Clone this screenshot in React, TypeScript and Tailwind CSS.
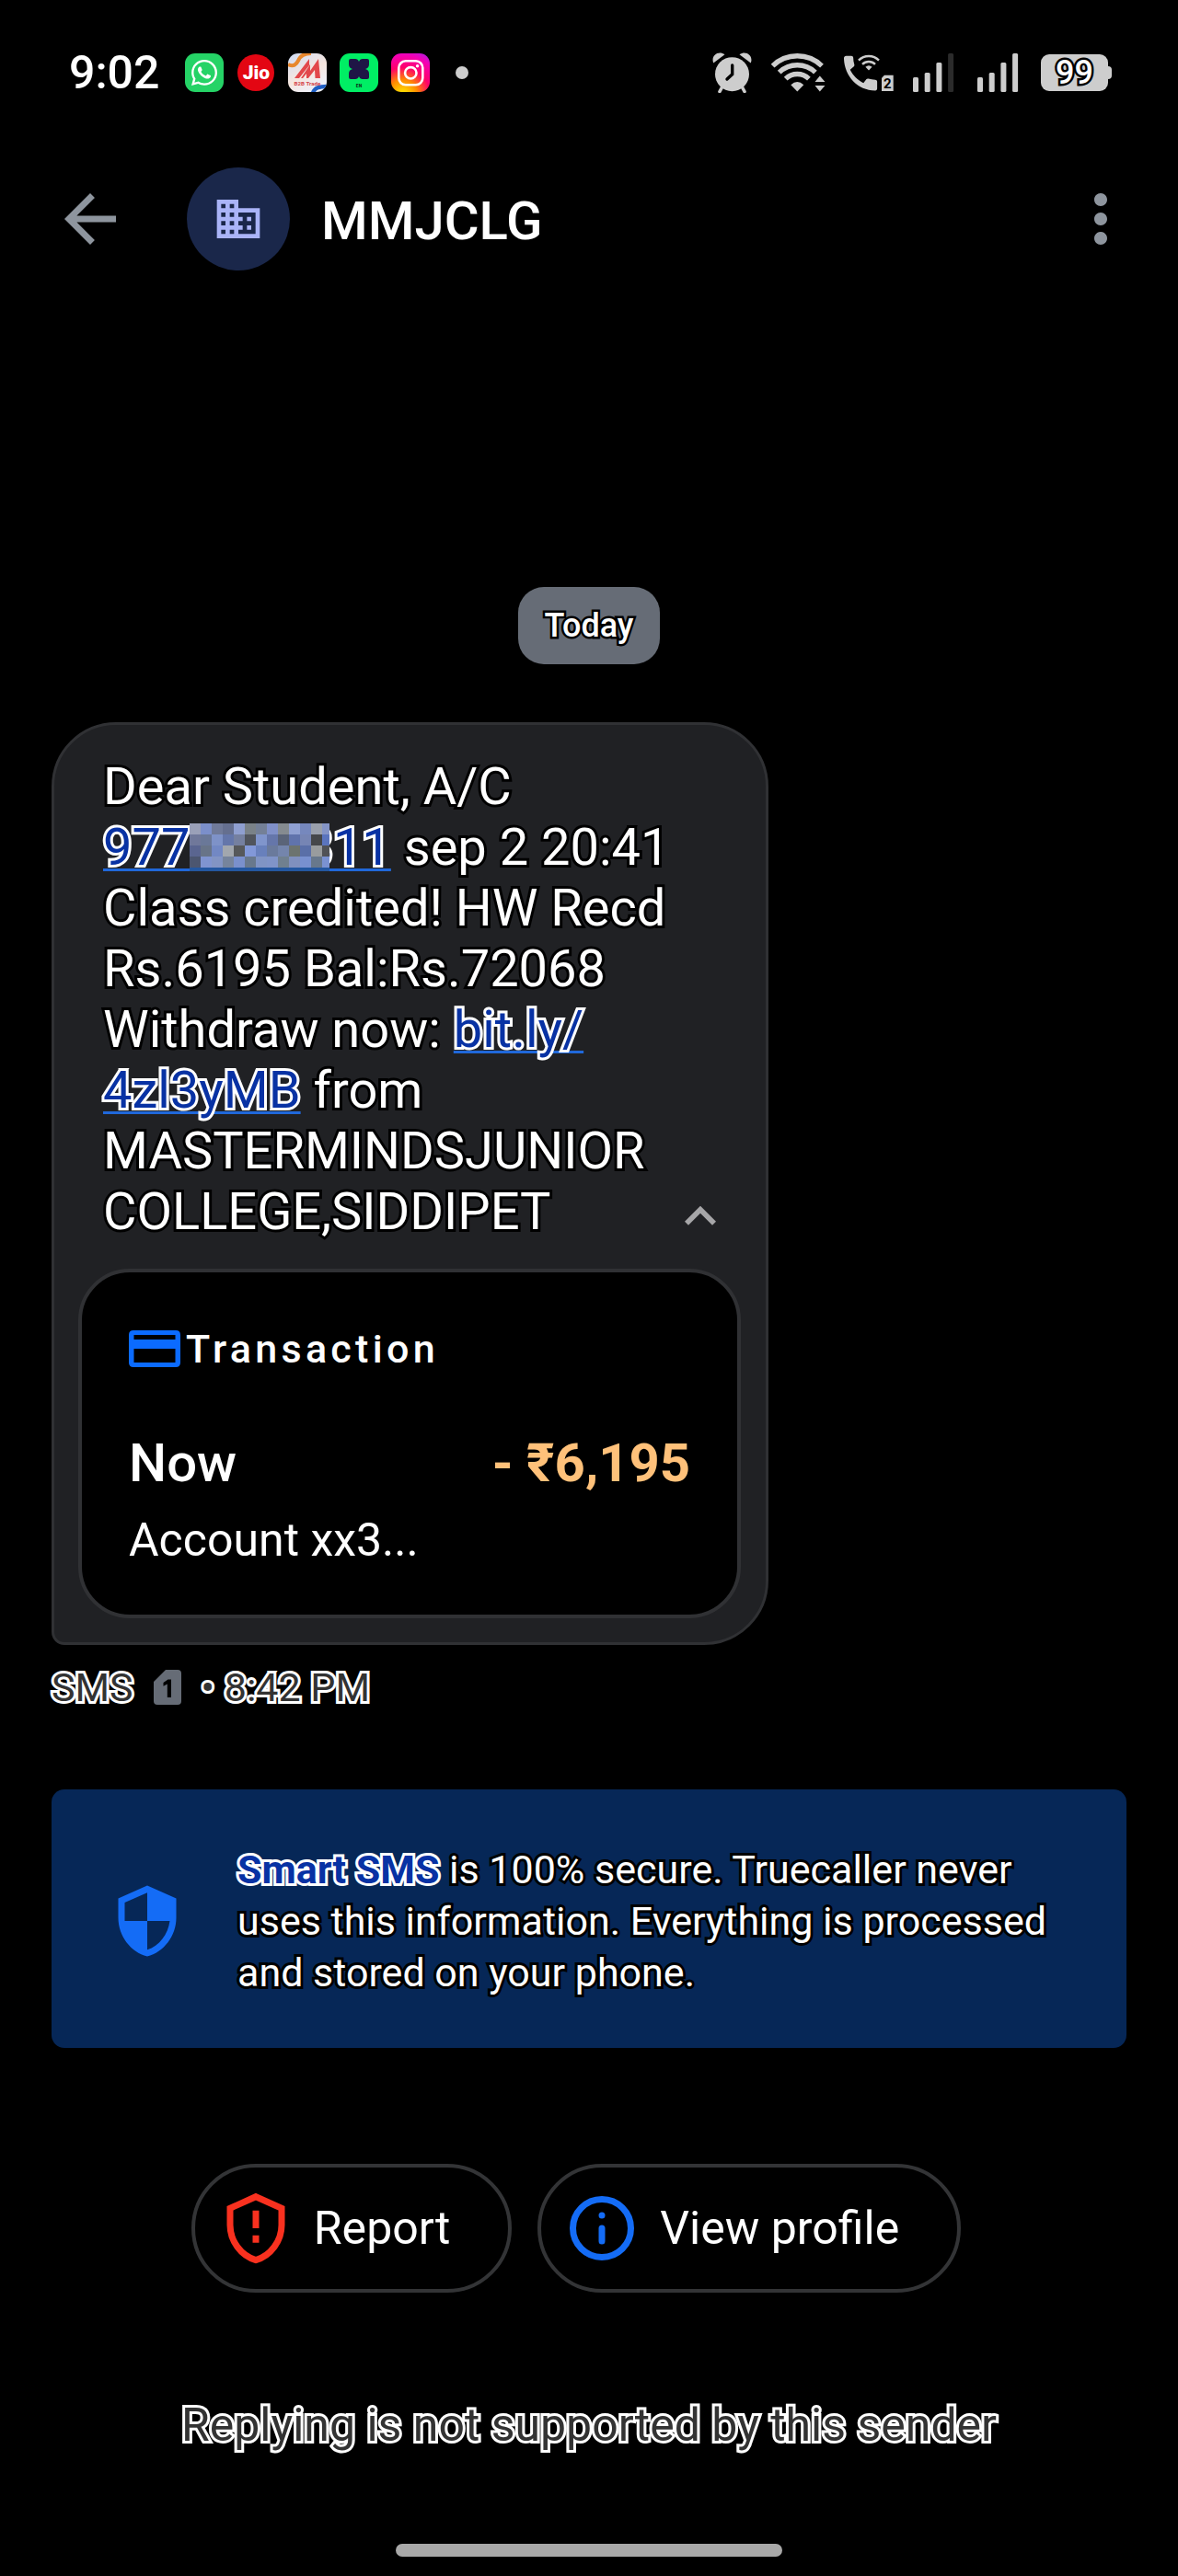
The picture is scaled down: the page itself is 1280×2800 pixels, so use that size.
import { FaWhatsapp } from 'react-icons/fa'
import { MdArrowBack, MdBusiness, MdKeyboardArrowUp, MdMoreVert, MdSecurity } from 'react-icons/md'

const outlineDark = '[-webkit-text-stroke:6px_#000] [paint-order:stroke]'
const outlineLight = '[-webkit-text-stroke:6px_#fff] [paint-order:stroke]'

const linkClass =
  'text-[#0832a4] [-webkit-text-stroke:6px_#fff] underline decoration-[#2068da] decoration-3 underline-offset-4 [text-decoration-skip-ink:none]'

const pillClass =
  'h-[140px] flex items-center gap-[21px] rounded-full border-4 border-[#333436] pl-6 pr-[63px] text-[50px] leading-[60px]'

// Blocks that hide the middle digits of the account number
const mosaic = [
  ['#9aa0b8', '#7b8fca', '#707a99', '#656f8f', '#8f9fd0', '#7a8288', '#748097', '#8090c8', '#858b90', '#8fa0d2', '#7688bd', '#9aa0ac', '#8494c6'],
  ['#70789a', '#6a7898', '#7e92c8', '#6476aa', '#7580a0', '#50545c', '#8095cc', '#6576aa', '#5a6478', '#6073ac', '#7685b4', '#45474a', '#5a74bd'],
  ['#5a6590', '#687488', '#7288c4', '#a2a7ae', '#56585a', '#8298d8', '#6880bc', '#6a7a9c', '#7485ac', '#6c736f', '#5a6fa8', '#999c9e', '#505256'],
  ['#4c5670', '#8094d0', '#8294c4', '#76849c', '#7a90cc', '#68788c', '#8094c4', '#8094c8', '#70808f', '#8090be', '#7890d0', '#68788c', '#7a92d2'],
]

function Signal({ bars }: { bars: number }) {
  const tops = [27, 22, 11, 1]
  return (
    <svg width="50" height="44" viewBox="0 0 50 44">
      {tops.map((y, i) => (
        <rect key={y} x={1 + i * 12.7} y={y} width="6" height={43 - y} rx="1.5" fill={i < bars ? '#cdcdcd' : '#2b2b2b'} />
      ))}
    </svg>
  )
}

function AppIcons() {
  return (
    <div className="flex items-center gap-3.5">
      <div className="w-[42px] h-[42px] rounded-[11px] bg-[#25d366] text-white flex items-center justify-center">
        <FaWhatsapp size={32} />
      </div>
      <div className="w-[42px] h-10 flex justify-center">
        <div className="w-10 h-10 rounded-full bg-[#e30613] text-white font-black text-[21px] leading-10 text-center">
          Jio
        </div>
      </div>
      <svg width="42" height="42" viewBox="0 0 42 42">
        <defs>
          <clipPath id="tile">
            <rect width="42" height="42" rx="11" />
          </clipPath>
          <linearGradient id="tileBg" x1="0" y1="0" x2="0.6" y2="1">
            <stop offset="0" stopColor="#cfdcf4" />
            <stop offset="0.6" stopColor="#f6e6df" />
            <stop offset="1" stopColor="#eef1fa" />
          </linearGradient>
        </defs>
        <g clipPath="url(#tile)">
          <rect width="42" height="42" fill="url(#tileBg)" />
          <path d="M0 12C6 15 9 12 11 8C13 3 17 0 25 0" fill="none" stroke="#e8872c" strokeWidth="4" />
          <path d="M27 43C29 37 34 36 43 36" fill="none" stroke="#1f5fc4" strokeWidth="4.5" />
          <path d="M7 27L23 6V13L12 27ZM14 27L24 12V19L33 6L35 27H29.5L29 18L22 27H20V22L16 27Z" fill="#e2474b" />
          <text x="21" y="34.5" textAnchor="middle" fontSize="6.2" fontWeight="700" fill="#d5454a">
            B2B Trade
          </text>
        </g>
      </svg>
      <svg width="42" height="42" viewBox="0 0 42 42">
        <rect width="42" height="42" rx="11" fill="#00ee64" />
        <path
          d="M12 6H17Q20 6 21 9Q22 6 25 6H30Q32 6 32 8V12Q32 16 28 17Q32 18 32 22V26Q32 28 30 28H25Q22 28 21 25Q20 28 17 28H12Q10 28 10 26V22Q10 18 14 17Q10 16 10 12V8Q10 6 12 6Z"
          fill="#1f1546"
        />
        <text x="21" y="36.5" textAnchor="middle" fontSize="5" fontWeight="900" fill="#0a3a20">
          EN
        </text>
      </svg>
      <div className="rounded-[11px] bg-[radial-gradient(circle_at_30%_107%,#ffd600_8%,#ff8a00_30%,#ff0169_55%,#f400b4_80%,#8a2bfa_105%)]">
        <svg width="42" height="42" viewBox="0 0 42 42" fill="none" stroke="#fff" strokeWidth="2.6">
          <rect x="8.3" y="8.3" width="26" height="26" rx="7.5" />
          <circle cx="21.3" cy="21.3" r="6.2" />
          <circle cx="28.6" cy="13.8" r="1.7" fill="#fff" stroke="none" />
        </svg>
      </div>
      <span className="ml-3.5 w-3.5 h-3.5 rounded-full bg-[#cdcdcd]" />
    </div>
  )
}

function StatusIcons() {
  return (
    <div className="flex items-center gap-5">
      <svg width="43" height="44" viewBox="0 0 43 44" fill="#cdcdcd">
        <circle cx="21.5" cy="23.7" r="18.5" />
        <path d="M1.2 11.5C-1.8 4 6 -2.5 13.5 2.2Z M41.8 11.5C44.8 4 37 -2.5 29.5 2.2Z" />
        <path d="M11 37L8 42.5M32 37L35 42.5" stroke="#cdcdcd" strokeWidth="3.6" strokeLinecap="round" />
        <path d="M21.7 14V23.7L16 29" fill="none" stroke="#000" strokeWidth="3.4" strokeLinecap="round" />
      </svg>
      <svg width="60" height="44" viewBox="0 0 60 44" fill="#cdcdcd">
        <g fill="none" stroke="#cdcdcd" strokeWidth="5.4">
          <path d="M2.6 14.6A38.3 38.3 0 0 1 56 14.6" />
          <path d="M9.7 21.6A28.3 28.3 0 0 1 48.9 21.6" />
          <path d="M16.7 28.6A18.3 18.3 0 0 1 41.9 28.6" />
        </g>
        <path d="M29.3 42.4L22.3 35.2Q29.3 28.6 36.3 35.2Z" />
        <path d="M53.8 25.5L48.5 32H59.5Z M53.8 42.5L48.5 36H59.5Z" />
      </svg>
      <svg width="54" height="44" viewBox="0 0 54 44" fill="#cdcdcd">
        <path
          transform="translate(-8 -2.6) scale(2.1)"
          d="M20.01 15.38c-1.23 0-2.42-.2-3.53-.56a.977.977 0 0 0-1.01.24l-1.57 1.97c-2.83-1.35-5.48-3.9-6.89-6.83l1.95-1.66c.27-.28.35-.67.24-1.02-.37-1.11-.56-2.3-.56-3.53 0-.54-.45-.99-.99-.99H5c-.9 0-1.2.6-1.2 1.3C4 13.28 10.73 21 20.01 21c.71 0 .99-.63.99-1.18v-3.45c0-.54-.45-.99-.99-.99z"
        />
        <g fill="none" stroke="#cdcdcd" strokeWidth="2.4">
          <path d="M16 8.6A15.3 15.3 0 0 1 38 8.6" />
          <path d="M20 12.8A10 10 0 0 1 34 12.8" />
        </g>
        <path d="M27 19.4L23.4 15.8Q27 12.6 30.6 15.8Z" />
        <path d="M44 24.7H53.7V42H41V27.7Z" />
        <text x="47.4" y="38.6" textAnchor="middle" fontSize="15" fontWeight="700" fill="#000">
          2
        </text>
      </svg>
      <Signal bars={3} />
      <Signal bars={4} />
      <div className="flex items-center">
        <div className="w-[73px] h-10 rounded-[9px] bg-[#cdcdcd] text-center text-[36px] leading-10 font-medium text-white [-webkit-text-stroke:5px_#000] [paint-order:stroke]">
          99
        </div>
        <span className="w-1 h-3.5 rounded-r-sm bg-[#cdcdcd]" />
      </div>
    </div>
  )
}

function HiddenDigits() {
  return (
    <span className="relative inline-block overflow-hidden align-[-7px] -mr-7">
      <span className="grid grid-cols-[repeat(12,12px)_8px] grid-rows-[repeat(4,12px)_4px]">
        {mosaic.flatMap((row, y) =>
          row.map((color, x) => <span key={`${y}-${x}`} style={{ backgroundColor: color }} />),
        )}
        <span className="col-span-13 bg-[#2457a0]" />
      </span>
    </span>
  )
}

function Message() {
  return (
    <div className="w-fit rounded-[70px] rounded-bl-[14px] border-3 border-[#303134] bg-[#202124] px-[26px] pt-[34px] pb-[26px]">
      <div className="flex items-end justify-between pl-[27px] pr-[11px]">
        <p className={`pb-1.5 text-[56px] leading-[66px] whitespace-nowrap ${outlineDark}`}>
          Dear Student, A/C
          <br />
          <a href="#account" className={linkClass}>
            977
            <HiddenDigits />
            311
          </a>{' '}
          sep 2 20:41
          <br />
          Class credited! HW Recd
          <br />
          Rs.6195 Bal:Rs.72068
          <br />
          Withdraw now:{' '}
          <a href="#link" className={linkClass}>
            bit.ly/
            <br />
            4zl3yMB
          </a>{' '}
          from
          <br />
          MASTERMINDSJUNIOR
          <br />
          COLLEGE,SIDDIPET
        </p>
        <button type="button" aria-label="Collapse" className="text-[#a6a6a8]">
          <MdKeyboardArrowUp size={68} />
        </button>
      </div>

      <div className="mt-[23px] w-[720px] rounded-[56px] border-4 border-[#303134] bg-black px-[51px] pt-[55px] pb-[51px]">
        <div className="flex items-center gap-1.5">
          <svg width="56" height="40" viewBox="0 0 56 40">
            <path
              fillRule="evenodd"
              fill="#0b6bff"
              d="M5 0H51Q56 0 56 5V35Q56 40 51 40H5Q0 40 0 35V5Q0 0 5 0ZM5.500 5V10H50.500V5ZM5.500 20V35H50.500V20Z"
            />
          </svg>
          <h2 className="text-[43px] leading-[56px] font-medium tracking-widest">Transaction</h2>
        </div>
        <div className="mt-[63px] flex justify-between text-[58px] leading-[66px]">
          <span className="font-medium">Now</span>
          <span className="font-bold text-[#ffc17a]">- ₹6,195</span>
        </div>
        <p className="mt-[21px] text-[50px] leading-[60px]">Account xx3...</p>
      </div>
    </div>
  )
}

export default function App() {
  return (
    <div className="min-h-screen bg-black text-white font-[Roboto,sans-serif] pb-[21px]">
      <div className="flex items-center justify-between h-[158px] pl-[75px] pr-[72px]">
        <div className="flex items-center gap-7">
          <span className="text-[50px] leading-[50px] font-medium">9:02</span>
          <AppIcons />
        </div>
        <StatusIcons />
      </div>

      <header className="mt-6 flex items-center h-28 pl-14 pr-[42px]">
        <button type="button" aria-label="Back" className="text-[#8e959e]">
          <MdArrowBack size={84} />
        </button>
        <div className="ml-[63px] w-28 h-28 rounded-full bg-[#1a274a] text-[#aab4f8] flex items-center justify-center">
          <MdBusiness size={56} />
        </div>
        <h1 className="ml-[34px] pt-1 flex-1 text-[58px] leading-[66px] font-medium">MMJCLG</h1>
        <button type="button" aria-label="More options" className="text-[#8e959e]">
          <MdMoreVert size={84} />
        </button>
      </header>

      <main className="mt-[344px] px-14">
        <div className="flex justify-center">
          <span className="rounded-[28px] bg-[#666c76] px-[29px] text-[36px] leading-[84px] font-medium [-webkit-text-stroke:5px_#000] [paint-order:stroke]">
            Today
          </span>
        </div>

        <div className="mt-[63px]">
          <Message />
        </div>
        <div className={`mt-[21px] flex items-center text-[43px] leading-[50px] text-[#333] ${outlineLight}`}>
          <span>SMS</span>
          <svg width="30" height="38" viewBox="0 0 30 38" className="mx-[22px]" role="img" aria-label="SIM 1">
            <path d="M13 0H26Q30 0 30 4V34Q30 38 26 38H4Q0 38 0 34V13Z" fill="#666c76" />
            <path d="M10.500 14L15.500 10.500H19V30H14.800V15.600L10.500 17.800Z" fill="#000" />
          </svg>
          <span>• 8:42 PM</span>
        </div>

        <section className="mt-[86px] flex items-center gap-14 rounded-[14px] bg-[#062757] pl-[62px] pr-10 pt-[59px] pb-[54px]">
          <MdSecurity size={84} className="shrink-0 text-[#146cf6]" />
          <p className={`text-[43px] leading-[56px] ${outlineDark}`}>
            <b className="text-[#0832a4] [-webkit-text-stroke:6px_#fff]">Smart SMS</b> is 100% secure. Truecaller never
            uses this information. Everything is processed and stored on your phone.
          </p>
        </section>

        <div className="mt-[126px] flex justify-center gap-7 pr-7">
          <button type="button" className={pillClass}>
            <svg width="84" height="84" viewBox="0 0 24 24">
              <path
                d="M12 2.200L20 5.800V11C20 15.900 16.700 20.500 12 21.900C7.300 20.500 4 15.900 4 11V5.800Z"
                fill="none"
                stroke="#f9311f"
                strokeWidth="2"
              />
              <path d="M11 6.500H13V12H11ZM11 14.200H13V16.500H11Z" fill="#f9311f" />
            </svg>
            Report
          </button>
          <button type="button" className={pillClass}>
            <svg width="84" height="84" viewBox="0 0 24 24" stroke="#146cf6" strokeWidth="2" strokeLinecap="round">
              <circle cx="12" cy="12" r="9" fill="none" />
              <path d="M12 8V8.010M12 12V16" />
            </svg>
            View profile
          </button>
        </div>

        <p className={`mt-[114px] text-center text-[50px] leading-[60px] text-[#333] ${outlineLight}`}>
          Replying is not supported by this sender
        </p>
      </main>

      <div className="mt-[99px] mx-auto w-[420px] h-3.5 rounded-full bg-[#a8a8a8]" />
    </div>
  )
}
